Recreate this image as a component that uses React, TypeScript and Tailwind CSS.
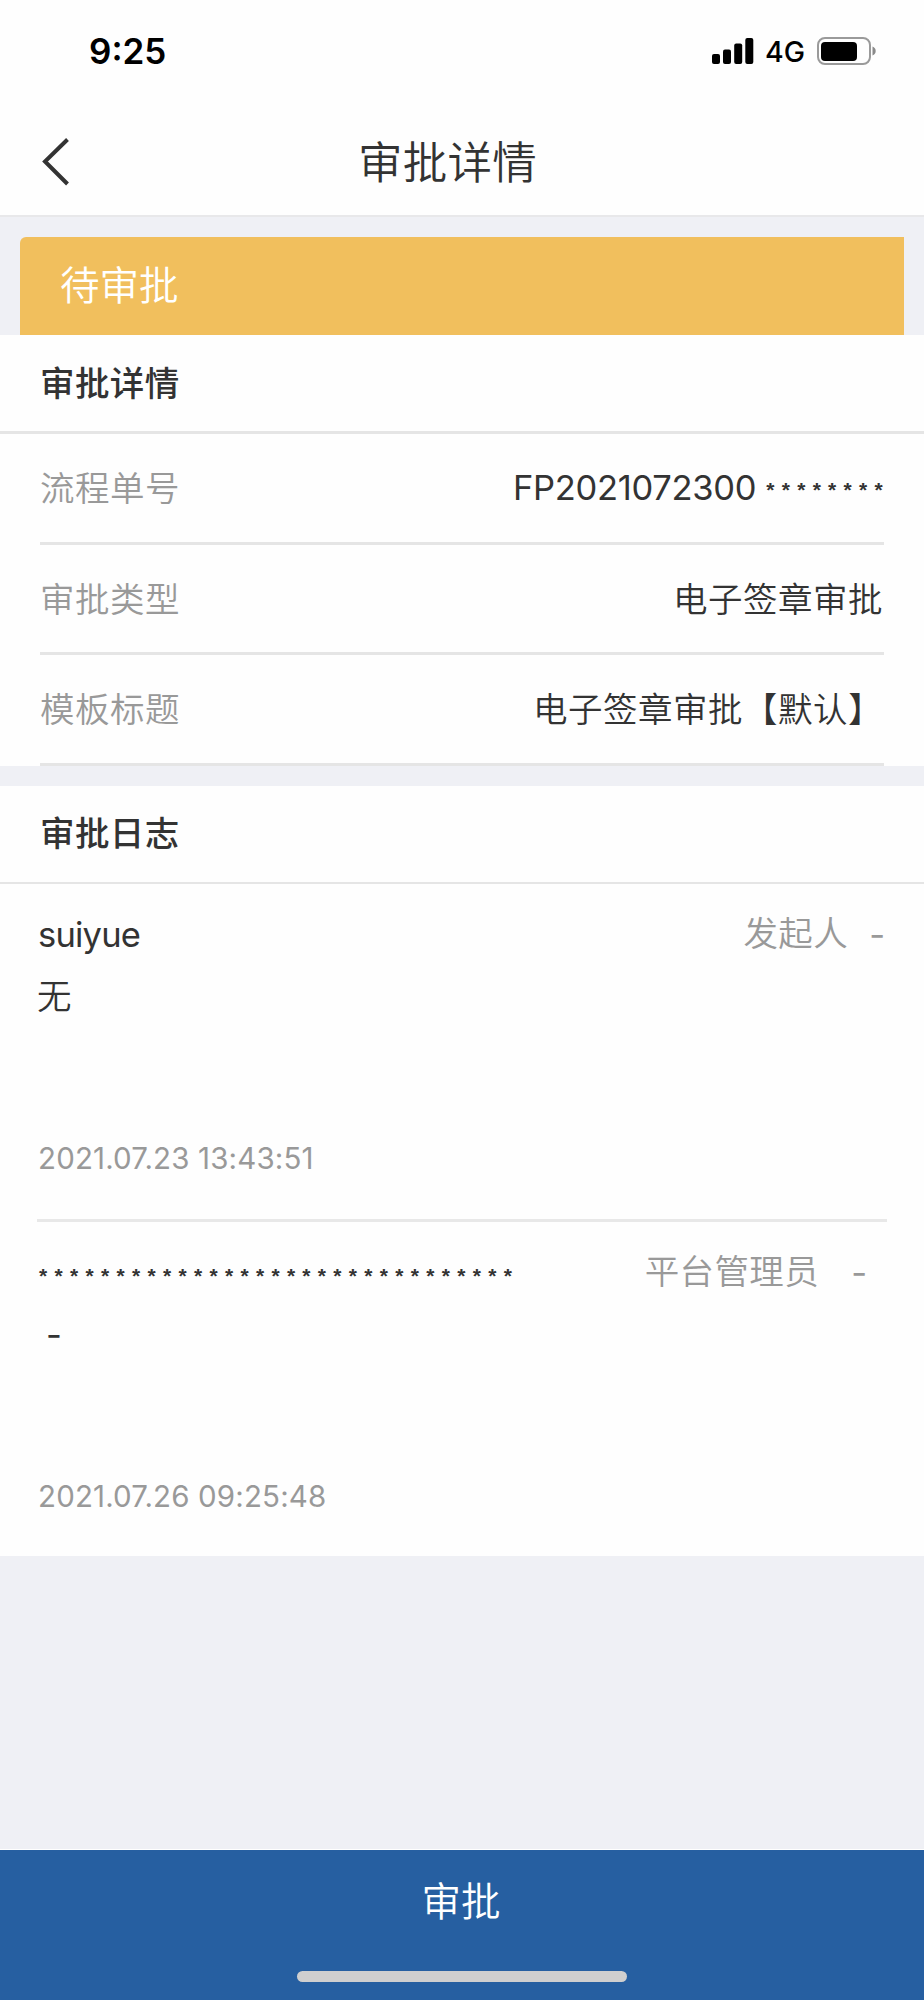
import React from 'react';

interface DetailField {
    label: string;
    value: string;
    mask?: string;
}

interface LogEntry {
    name: string;
    masked?: boolean;
    role: string;
    result: string;
    comment: string;
    time: string;
}

const fields: DetailField[] = [
    { label: '流程单号', value: 'FP2021072300', mask: '********' },
    { label: '审批类型', value: '电子签章审批' },
    { label: '模板标题', value: '电子签章审批【默认】' },
];

const logs: LogEntry[] = [
    { name: 'suiyue', role: '发起人', result: '-', comment: '无', time: '2021.07.23 13:43:51' },
    { name: '*******************************', masked: true, role: '平台管理员', result: '-', comment: '-', time: '2021.07.26 09:25:48' },
];

const StatusBar: React.FC = () => (
    <div className="flex h-[102px] items-center justify-between pl-[89px] pr-[47px] text-black">
        <span className="text-[35px] leading-none font-semibold">9:25</span>
        <div className="flex items-center">
            <svg width="42" height="28" viewBox="0 0 42 28" fill="currentColor">
                <rect x="0" y="17" width="8" height="10" rx="2" />
                <rect x="11" y="12.5" width="8" height="14.5" rx="2" />
                <rect x="22.2" y="6.5" width="8" height="20.5" rx="2" />
                <rect x="33.3" y="1" width="8" height="26" rx="2" />
            </svg>
            <span className="ml-[11px] pt-0.5 text-[28.5px] leading-none font-[450]">4G</span>
            <svg className="ml-[12px]" width="60" height="28" viewBox="0 0 60 28">
                <rect x="1" y="1" width="52" height="26" rx="7" fill="none" stroke="#9a9a9a" strokeWidth="2" />
                <rect x="4" y="5" width="36" height="19" rx="4" fill="#000" />
                <path d="M55.5 9.5c2 .9 3.2 2.5 3.2 4.5s-1.2 3.6-3.2 4.5z" fill="#8a8a8a" />
            </svg>
        </div>
    </div>
);

const SectionHeader: React.FC<{ title: string; className?: string }> = ({ title, className = '' }) => (
    <h2 className={`flex items-center border-[#e5e5e5] pl-10 text-[34.5px] leading-none font-medium tracking-[0.4px] ${className}`}>{title}</h2>
);

const FieldRow: React.FC<DetailField> = ({ label, value, mask }) => (
    <div className="mx-10 flex h-[110.7px] items-center justify-between border-b-3 border-[#e5e5e5] pt-[3px] text-[34.5px] leading-none">
        <span className="tracking-[0.5px] text-[#999]">{label}</span>
        {mask ? (
            <span className="-mr-[6px] flex items-center">
                <span className="pb-[2px] font-normal tracking-[-0.3px]">{value}</span>
                <span className="ml-[10px] font-['Liberation_Sans'] text-[21px] font-bold tracking-[7.3px]">{mask}</span>
            </span>
        ) : (
            <span className="pr-px tracking-[0.5px]">{value}</span>
        )}
    </div>
);

const LogItem: React.FC<{ entry: LogEntry }> = ({ entry }) => (
    <div className="mr-[37px] ml-[37px] flex h-[338px] flex-col border-b-3 border-[#e8e8e8] pt-[30px] text-[34.5px] last:h-[334px] last:border-b-0">
        <div className="flex h-[40px] items-center justify-between leading-[40px]">
            {entry.masked ? (
                <span className="pt-[7px] pl-[2px] font-['Liberation_Sans'] text-[21px] font-bold tracking-[7.32px]">{entry.name}</span>
            ) : (
                <span className="pt-[2px] pl-px font-normal tracking-[-0.8px]">{entry.name}</span>
            )}
            <span className={`flex text-[#999] ${entry.masked ? 'gap-8 pr-5' : 'gap-[21px] pr-[2px]'}`}>
                <span className="tracking-[0.4px]">{entry.role}</span>
                <span className="pt-px font-normal">{entry.result}</span>
            </span>
        </div>
        <p className={`mt-[23px] h-[40px] leading-[40px] ${entry.masked ? 'pl-[9px] font-normal' : ''}`}>{entry.comment}</p>
        <time className="mt-[121px] pl-px text-[29.5px] leading-[40px] font-normal tracking-[0.15px] text-[#999]">{entry.time}</time>
    </div>
);

export default function App() {
    return (
        <div className="flex h-[2000px] w-[924px] flex-col bg-[#eff0f5] font-[Inter,'Noto_Sans_CJK_SC',sans-serif] font-[350] text-[#333]">
            <header className="h-[217px] shrink-0 border-b-2 border-[#e8e8ea] bg-[#fefefe]">
                <StatusBar />
                <div className="grid h-[120px] grid-cols-[100px_1fr_129px] items-center">
                    <svg className="ml-[42px]" width="28" height="48" viewBox="0 0 28 48" fill="none" stroke="#333" strokeWidth="4">
                        <path d="M25.5 1.5 3 23.5l22.5 22.5" />
                    </svg>
                    <h1 className="pt-[3px] text-center text-[44.5px] leading-none tracking-[0.3px]">审批详情</h1>
                </div>
            </header>

            <div className="mx-5 mt-5 flex h-[98px] shrink-0 items-center rounded-tl-md bg-[#f1bf5d] pt-[2px] pl-10 text-[39.5px] leading-none text-white">
                待审批
            </div>

            <section className="h-[431px] shrink-0 bg-[#fefefe]">
                <SectionHeader title="审批详情" className="h-[99px] border-b-3 pt-[2px]" />
                {fields.map((field) => (
                    <FieldRow key={field.label} {...field} />
                ))}
            </section>

            <section className="mt-5 shrink-0 bg-[#fefefe]">
                <SectionHeader title="审批日志" className="h-[98px] border-b-2 pt-px" />
                {logs.map((entry) => (
                    <LogItem key={entry.time} entry={entry} />
                ))}
            </section>

            {/* Bottom action */}
            <button className="mt-auto flex h-[151px] flex-col items-center border-t border-white bg-[#265fa1] text-white">
                <span className="mt-[32px] pr-[2px] text-[39.5px] leading-[40px]">审批</span>
                <span className="mt-[49px] h-[11px] w-[330px] rounded-full bg-[#cfcfcf]" />
            </button>
        </div>
    );
}
